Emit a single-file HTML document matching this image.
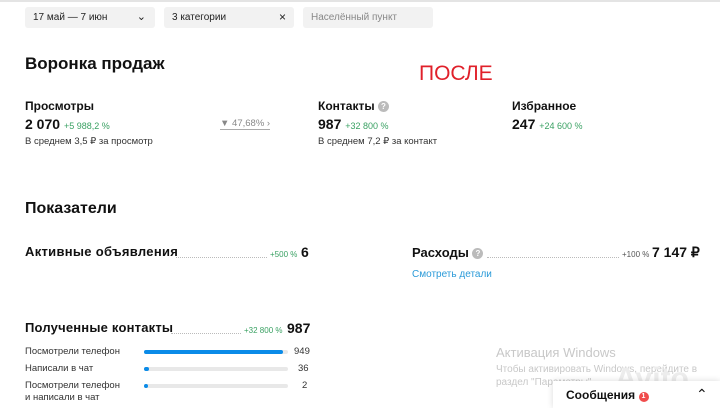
<!DOCTYPE html><html><head><meta charset="utf-8"><style>
*{margin:0;padding:0;box-sizing:border-box}
body{width:720px;height:408px;overflow:hidden;background:#fff;font-family:"Liberation Sans",Arial,sans-serif;color:#111;position:relative}
.a{position:absolute;white-space:nowrap}
.box{position:absolute;top:7px;height:21px;background:#f2f2f2;border-radius:3px;font-size:10px;line-height:21px;padding-left:8px;color:#222}
.g{color:#3aa163}
.dots{position:absolute;border-bottom:1px dotted #bbb;height:1px}
.bar{position:absolute;height:4px;background:#e8e8e8;border-radius:2px;left:144px;width:144px}
.bar i{position:absolute;left:0;top:0;height:4px;background:#0a8be8;border-radius:2px}
.s{font-size:10px;color:#333}
</style></head><body>
<div class="a" style="left:0;top:0;width:720px;height:2px;background:#e4e4e4"></div>
<div class="box" style="left:25px;width:130px">17 май — 7 июн<span style="position:absolute;right:9px;font-size:11px">&#8964;</span></div>
<div class="box" style="left:164px;width:130px">3 категории<span style="position:absolute;right:8px;font-size:12px">×</span></div>
<div class="box" style="left:303px;width:130px;color:#888">Населённый пункт</div>
<div class="a" style="left:25px;top:54px;font-size:17px;font-weight:bold">Воронка продаж</div>
<div class="a" style="left:419px;top:62px;font-size:21px;color:#e0202a">ПОСЛЕ</div>
<div class="a" style="left:25px;top:99px;font-size:12px;font-weight:bold">Просмотры</div>
<div class="a" style="left:25px;top:116px;font-size:14px;font-weight:bold">2 070 <span class="g" style="font-size:9px;font-weight:normal">+5 988,2 %</span></div>
<div class="a s" style="left:25px;top:136px;font-size:9.5px">В среднем 3,5 ₽ за просмотр</div>
<div class="a" style="left:220px;top:118px;font-size:9.5px;color:#888;border-bottom:1px solid #aaa">▼ 47,68% ›</div>
<div class="a" style="left:318px;top:99px;font-size:12px;font-weight:bold">Контакты <span style="display:inline-block;width:11px;height:11px;border-radius:50%;background:#bbb;color:#fff;font-size:8px;text-align:center;line-height:11px;vertical-align:1px">?</span></div>
<div class="a" style="left:318px;top:116px;font-size:14px;font-weight:bold">987 <span class="g" style="font-size:9px;font-weight:normal">+32 800 %</span></div>
<div class="a s" style="left:318px;top:136px;font-size:9.5px">В среднем 7,2 ₽ за контакт</div>
<div class="a" style="left:512px;top:99px;font-size:12px;font-weight:bold">Избранное</div>
<div class="a" style="left:512px;top:116px;font-size:14px;font-weight:bold">247 <span class="g" style="font-size:9px;font-weight:normal">+24 600 %</span></div>
<div class="a" style="left:25px;top:200px;font-size:16px;font-weight:bold">Показатели</div>
<div class="a" style="left:25px;top:244px;font-size:13px;font-weight:bold;letter-spacing:.3px">Активные объявления</div>
<div class="dots" style="left:176px;width:91px;top:257px"></div>
<div class="a" style="left:270px;top:250px;font-size:8px"><span class="g">+500 %</span></div>
<div class="a" style="left:301px;top:244px;font-size:14px;font-weight:bold">6</div>
<div class="a" style="left:412px;top:245px;font-size:13px;font-weight:bold">Расходы <span style="display:inline-block;width:11px;height:11px;border-radius:50%;background:#bbb;color:#fff;font-size:8px;text-align:center;line-height:11px;vertical-align:1px">?</span></div>
<div class="dots" style="left:487px;width:132px;top:257px"></div>
<div class="a" style="left:622px;top:250px;font-size:8px;color:#555">+100 %</div>
<div class="a" style="left:652px;top:244px;font-size:14px;font-weight:bold">7 147 ₽</div>
<div class="a" style="left:412px;top:269px;font-size:10px;color:#2a9ad8">Смотреть детали</div>
<div class="a" style="left:25px;top:320px;font-size:13px;font-weight:bold;letter-spacing:.2px">Полученные контакты</div>
<div class="dots" style="left:171px;width:70px;top:333px"></div>
<div class="a" style="left:244px;top:326px;font-size:8px"><span class="g">+32 800 %</span></div>
<div class="a" style="left:287px;top:320px;font-size:14px;font-weight:bold">987</div>
<div class="a s" style="left:25px;top:346px;font-size:9.5px">Посмотрели телефон</div>
<div class="bar" style="top:350px"><i style="width:139px"></i></div>
<div class="a s" style="left:294px;top:346px;font-size:9.5px">949</div>
<div class="a s" style="left:25px;top:363px;font-size:9.5px">Написали в чат</div>
<div class="bar" style="top:367px"><i style="width:5px"></i></div>
<div class="a s" style="left:298px;top:363px;font-size:9.5px">36</div>
<div class="a s" style="left:25px;top:380px;font-size:9.5px;line-height:12px">Посмотрели телефон<br>и написали в чат</div>
<div class="bar" style="top:384px"><i style="width:4px"></i></div>
<div class="a s" style="left:302px;top:380px;font-size:9.5px">2</div>
<div class="a" style="left:496px;top:345px;font-size:13px;color:#c8c8c8">Активация Windows</div>
<div class="a" style="left:496px;top:363px;font-size:10px;color:#c8c8c8;line-height:13px">Чтобы активировать Windows, перейдите в<br>раздел "Параметры".</div>
<div class="a" style="left:615px;top:362px;font-size:30px;color:#ececec;font-weight:bold">Avito</div>
<div class="a" style="left:553px;top:381px;width:167px;height:27px;background:#fff;box-shadow:0 0 6px rgba(0,0,0,.15)"></div>
<div class="a" style="left:566px;top:388px;font-size:12px;font-weight:bold">Сообщения <span style="display:inline-block;width:10px;height:10px;border-radius:50%;background:#f04c4c;color:#fff;font-size:7px;text-align:center;line-height:10px;vertical-align:1px">1</span></div>
<div class="a" style="left:696px;top:386px;font-size:14px">&#8963;</div>
</body></html>
